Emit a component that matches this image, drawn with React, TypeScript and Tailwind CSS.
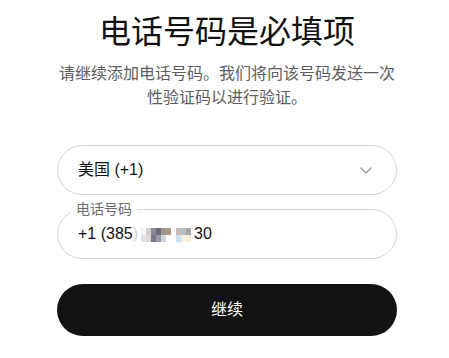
const font = { fontFamily: '"Liberation Sans", "Noto Sans CJK SC", sans-serif' };

const blurRows = [
  ["#f4f4f4", "#cfcfcf", "#8c8a90", "#6f6a7a", "#9e9590", "#a8988a", "#ffffff", "#c4bcb6", "#b4bcc6", "#a8a6a8"],
  ["#dfe4ea", "#e2dbd2", "#7a7888", "#959aa4", "#d0d6de", "#ffffff", "#ffffff", "#c6e2f2", "#f2f0e2", "#f6eed2"],
];

function Blurred() {
  return (
    <span className="inline-flex flex-col mx-[3px] translate-y-[1px]">
      {blurRows.map((row, i) => (
        <span key={i} className="flex">
          {row.map((c, j) => (
            <span key={j} className="w-[5px] h-[7px]" style={{ background: c }} />
          ))}
        </span>
      ))}
    </span>
  );
}

export default function App() {
  return (
    <div className="w-[449px] h-[358px] bg-white flex flex-col items-center pt-[12px] pl-[5px]" style={font}>
      <h1 className="text-[32px] leading-[40px] text-[#111111] font-normal">电话号码是必填项</h1>
      <p className="w-[340px] mt-[10px] text-center text-[16px] leading-[24px] text-[#5d5d5d]">
        请继续添加电话号码。我们将向该号码发送一次性验证码以进行验证。
      </p>

      <div className="w-[340px] mt-[35px] flex flex-col">
        <div className="h-[50px] rounded-full border border-[#d4d4d4] flex items-center justify-between pl-[20px] pr-[24px]">
          <span className="text-[16px] text-[#111111]">美国 (+1)</span>
          <svg width="12" height="7" viewBox="0 0 12 7" fill="none" className="mt-[1px]">
            <path d="M1 1l5 5 5-5" stroke="#9a9a9a" strokeWidth="1.4" strokeLinecap="round" strokeLinejoin="round" />
          </svg>
        </div>

        <div className="relative mt-[14px] h-[50px] rounded-full border border-[#d4d4d4] flex items-center pl-[20px]">
          <span className="absolute left-[13px] -top-[8px] bg-white px-[5px] text-[14px] leading-[14px] text-[#6b6b6b]">
            电话号码
          </span>
          <span className="flex items-center text-[16px] text-[#111111]">
            <span>+1 (385</span>
            <span className="text-[#d0d0d0]">)</span>
            <Blurred />
            <span>30</span>
          </span>
        </div>

        <button className="mt-[25px] h-[52px] rounded-full bg-[#131313] text-white text-[16px]">继续</button>
      </div>
    </div>
  );
}
